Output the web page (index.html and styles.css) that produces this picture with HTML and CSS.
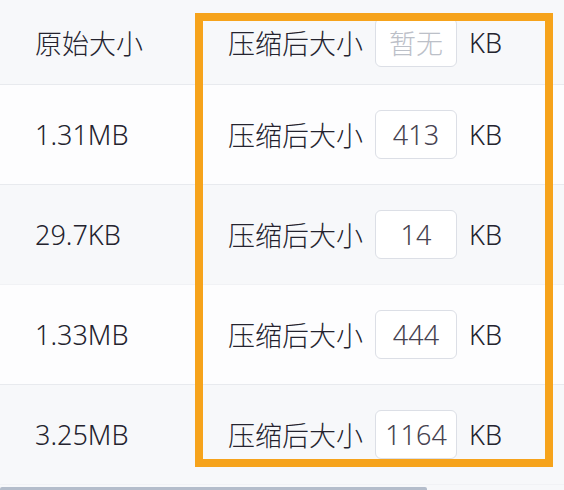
FILE: index.html
```html
<!DOCTYPE html>
<html lang="zh-CN">
<head>
    <meta charset="UTF-8">
    <meta name="viewport" content="width=device-width, initial-scale=1.0">
    <title>压缩列表</title>
    <link rel="stylesheet" href="styles.css">
</head>
<body>
    <div class="table">
        <div class="row head">
            <div class="cell origin">原始大小</div>
            <div class="cell result">
                <span>压缩后大小</span>
                <span class="size-input empty">暂无</span>
                <span>KB</span>
            </div>
        </div>
        <div class="row">
            <div class="cell origin">1.31MB</div>
            <div class="cell result">
                <span>压缩后大小</span>
                <span class="size-input">413</span>
                <span>KB</span>
            </div>
        </div>
        <div class="row striped">
            <div class="cell origin">29.7KB</div>
            <div class="cell result">
                <span>压缩后大小</span>
                <span class="size-input">14</span>
                <span>KB</span>
            </div>
        </div>
        <div class="row">
            <div class="cell origin">1.33MB</div>
            <div class="cell result">
                <span>压缩后大小</span>
                <span class="size-input">444</span>
                <span>KB</span>
            </div>
        </div>
        <div class="row striped">
            <div class="cell origin">3.25MB</div>
            <div class="cell result">
                <span>压缩后大小</span>
                <span class="size-input">1164</span>
                <span>KB</span>
            </div>
        </div>
        <div class="scrollbar"><div class="thumb"></div></div>
    </div>
    <div class="highlight"></div>
</body>
</html>
```

FILE: styles.css
```css
body {
    margin: 0;
    background-color: #fdfdfe;
    font-family: "Noto Sans", "Noto Sans CJK SC", sans-serif;
    font-size: 27px;
    font-weight: 300;
    color: #24232e;
    overflow: hidden;
}
.table {
    display: flex;
    flex-direction: column;
    width: 564px;
}
.row {
    display: flex;
    height: 99px;
    border-bottom: 1px solid #e8eaee;
    background-color: #fdfdfe;
}
.row.head {
    height: 84px;
    background-color: #f7f8fa;
}
.row.striped {
    background-color: #f7f8fa;
    border-bottom-color: #f1f2f5;
}
.cell {
    display: flex;
    align-items: center;
    padding-left: 35px;
}
.origin {
    width: 158px;
}
.result {
    gap: 12px;
}
.size-input {
    width: 80px;
    height: 47px;
    border: 1px solid #dcdfe6;
    border-radius: 6px;
    background-color: #ffffff;
    display: flex;
    align-items: center;
    justify-content: center;
    color: #464250;
}
.size-input.empty {
    color: #bcc0c8;
}
.scrollbar {
    height: 5px;
    background-color: #f7f8fa;
    display: flex;
    align-items: flex-end;
}
.thumb {
    width: 427px;
    height: 3px;
    background-color: #b4bdcb;
    border-radius: 2px 2px 0 0;
}
.highlight {
    position: absolute;
    left: 195px;
    top: 13px;
    width: 358px;
    height: 454px;
    box-sizing: border-box;
    border: 8px solid #f6a31b;
}
```
